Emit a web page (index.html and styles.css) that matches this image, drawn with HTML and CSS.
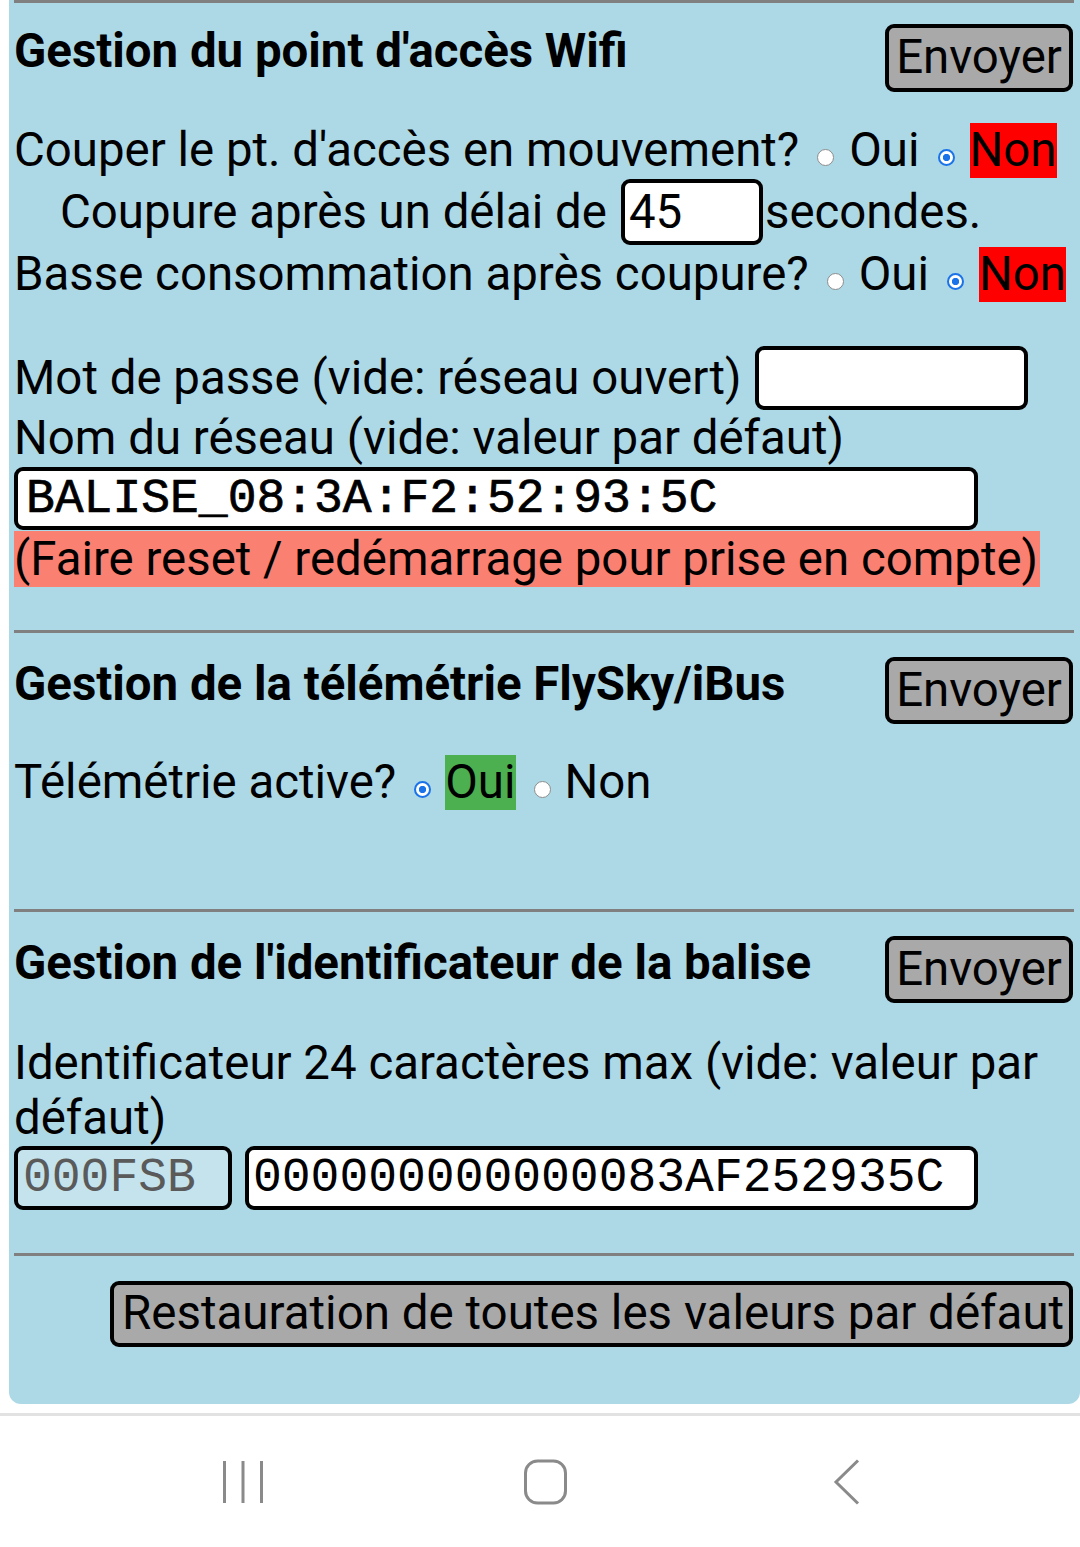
FILE: index.html
```html
<!DOCTYPE html>
<html lang="fr">
<head>
<meta charset="utf-8">
<title>Balise - configuration</title>
<link rel="stylesheet" href="styles.css">
</head>
<body>
<div class="panel">
  <div class="rule rule-top"></div>

  <section class="sec">
    <div class="head">
      <h2>Gestion du point d'accès Wifi</h2>
      <button class="btn">Envoyer</button>
    </div>
    <div class="line r1">
      <span>Couper le pt. d'accès en mouvement?</span>
      <input type="radio" class="radio" name="cut">
      <span>Oui</span>
      <input type="radio" class="radio" name="cut" checked>
      <span class="red">Non</span>
    </div>
    <div class="line r2">
      <span>Coupure après un délai de</span>
      <input type="text" class="field num" value="45">
      <span>secondes.</span>
    </div>
    <div class="line r3">
      <span>Basse consommation après coupure?</span>
      <input type="radio" class="radio" name="low">
      <span>Oui</span>
      <input type="radio" class="radio" name="low" checked>
      <span class="red">Non</span>
    </div>
    <div class="line r4">
      <span>Mot de passe (vide: réseau ouvert)</span>
      <input type="password" class="field pwd" value="">
    </div>
    <div class="line r5">
      <span>Nom du réseau (vide: valeur par défaut)</span>
    </div>
    <div class="line r6">
      <input type="text" class="field mono ssid" value="BALISE_08:3A:F2:52:93:5C">
    </div>
    <div class="r7"><span class="note">(Faire reset / redémarrage pour prise en compte)</span></div>
  </section>

  <div class="rule rule-2"></div>

  <section class="sec">
    <div class="head head-2">
      <h2>Gestion de la télémétrie FlySky/iBus</h2>
      <button class="btn">Envoyer</button>
    </div>
    <div class="line t1">
      <span>Télémétrie active?</span>
      <input type="radio" class="radio tr" name="tel" checked>
      <span class="green">Oui</span>
      <input type="radio" class="radio tr" name="tel">
      <span>Non</span>
    </div>
  </section>

  <div class="rule rule-3"></div>

  <section class="sec">
    <div class="head head-3">
      <h2>Gestion de l'identificateur de la balise</h2>
      <button class="btn">Envoyer</button>
    </div>
    <p class="para">Identificateur 24 caractères max (vide: valeur par défaut)</p>
    <div class="line ids">
      <input type="text" class="field mono prefix" value="000FSB" disabled>
      <input type="text" class="field mono ident" value="000000000000083AF252935C">
    </div>
  </section>

  <div class="rule rule-4"></div>

  <div class="reset-row">
    <button class="btn btn-reset">Restauration de toutes les valeurs par défaut</button>
  </div>
</div>

<nav class="navbar">
  <svg class="nav-ico" width="44" height="46" viewBox="0 0 44 46" aria-label="Récents">
    <path d="M3.5 2v42M22 2v42M40.5 2v42" stroke="#8a8a8a" stroke-width="3" fill="none"/>
  </svg>
  <svg class="nav-ico" width="44" height="46" viewBox="0 0 44 46" aria-label="Accueil">
    <rect x="2.5" y="2" width="40" height="42" rx="12" ry="12" stroke="#8a8a8a" stroke-width="3" fill="none"/>
  </svg>
  <svg class="nav-ico" width="44" height="46" viewBox="0 0 44 46" aria-label="Retour">
    <path d="M33 1.5L11 23L33 44.5" stroke="#8a8a8a" stroke-width="3" fill="none" stroke-linejoin="miter"/>
  </svg>
</nav>
</body>
</html>
```

FILE: styles.css
```css
html, body {
  margin: 0;
  padding: 0;
  background: #ffffff;
}

body {
  width: 1080px;
  height: 1547px;
  overflow: hidden;
  font-family: Roboto, "Noto Sans", "Liberation Sans", sans-serif;
  color: #000;
}

.panel {
  margin-left: 9px;
  width: 1071px;
  box-sizing: border-box;
  background: #add8e6;
  border-radius: 0 0 12px 12px;
  padding: 0 6px 57px 5px;
}

.rule {
  height: 3px;
  background: #808080;
}

.rule-2 { margin-top: 43px; }
.rule-3 { margin-top: 99px; }
.rule-4 { margin-top: 43px; }

.head {
  display: flex;
  justify-content: space-between;
  align-items: flex-start;
  margin-top: 21px;
}

.head-2,
.head-3 {
  margin-top: 24px;
}

.head h2 {
  margin: 0;
  font-size: 47.4px;
  line-height: 55px;
  font-weight: 700;
}

.btn {
  width: 188px;
  height: 68px;
  box-sizing: border-box;
  border: 4px solid #000;
  border-radius: 9px;
  background: #a9a9a9;
  color: #000;
  font-family: Roboto, "Noto Sans", sans-serif;
  font-size: 47.4px;
  line-height: 1;
  padding: 0;
  margin-right: 1px;
}

.head-2 .btn,
.head-3 .btn {
  height: 67px;
}

.line {
  display: flex;
  align-items: baseline;
  font-size: 47.4px;
  line-height: 55px;
  white-space: nowrap;
}

.r1 { margin-top: 31px; }
.r2 { margin-top: 1px; padding-left: 46px; }
.r3 { margin-top: 2px; }
.r4 { margin-top: 44px; }
.r5 { margin-top: 1px; }
.r6 { margin-top: 1px; }
.t1 { margin-top: 31px; }

.radio {
  appearance: none;
  -webkit-appearance: none;
  width: 17px;
  height: 17px;
  box-sizing: border-box;
  margin: 0 15px 0 18px;
  border: 1px solid #8d8d8d;
  border-radius: 50%;
  background: #ffffff;
}

.radio:checked {
  border: 2px solid #1a73e8;
  background: radial-gradient(circle, #1a73e8 0 3.4px, #ffffff 3.9px);
}

.tr {
  margin: 0 14px 0 18px;
}

.red { background: #ff0000; }
.green { background: #4caf50; }

.field {
  box-sizing: border-box;
  border: 4px solid #000;
  border-radius: 9px;
  background: #ffffff;
  color: #000;
  font-family: Roboto, "Noto Sans", sans-serif;
  font-size: 47.4px;
  padding: 0 4px;
  outline: none;
}

.num {
  width: 142px;
  height: 66px;
  margin: 0 2px 0 14px;
}

.pwd {
  width: 273px;
  height: 64px;
  margin-left: 14px;
}

.mono {
  font-family: "Liberation Mono", "Courier New", monospace;
  font-size: 48px;
}

.ssid {
  width: 964px;
  height: 63px;
  padding-left: 8px;
  -webkit-text-stroke: 0.7px #000;
}

.r7 {
  margin-top: 1px;
}

.note {
  display: inline-block;
  background: #fa8072;
  font-size: 47.4px;
  line-height: 56px;
  padding-right: 2px;
}

.para {
  margin: 33px 0 0 0;
  font-size: 47.4px;
  line-height: 55px;
}

.ids {
  align-items: flex-start;
}

.prefix {
  width: 218px;
  height: 64px;
  background: #c4e3ed;
  color: #5a5a5a;
  padding-left: 5px;
}

.ident {
  width: 733px;
  height: 64px;
  margin-left: 13px;
  padding-left: 4px;
}

.reset-row {
  display: flex;
  justify-content: flex-end;
  margin-top: 25px;
}

.btn-reset {
  width: 963px;
  height: 66px;
  white-space: nowrap;
  overflow: hidden;
  text-align: left;
  padding-left: 8px;
  font-size: 47.5px;
}

.navbar {
  margin-top: 9px;
  border-top: 3px solid #e2e2e2;
  height: 132px;
  display: flex;
  align-items: center;
  padding-left: 221px;
  gap: 258px;
}

.nav-ico {
  display: block;
}
```
